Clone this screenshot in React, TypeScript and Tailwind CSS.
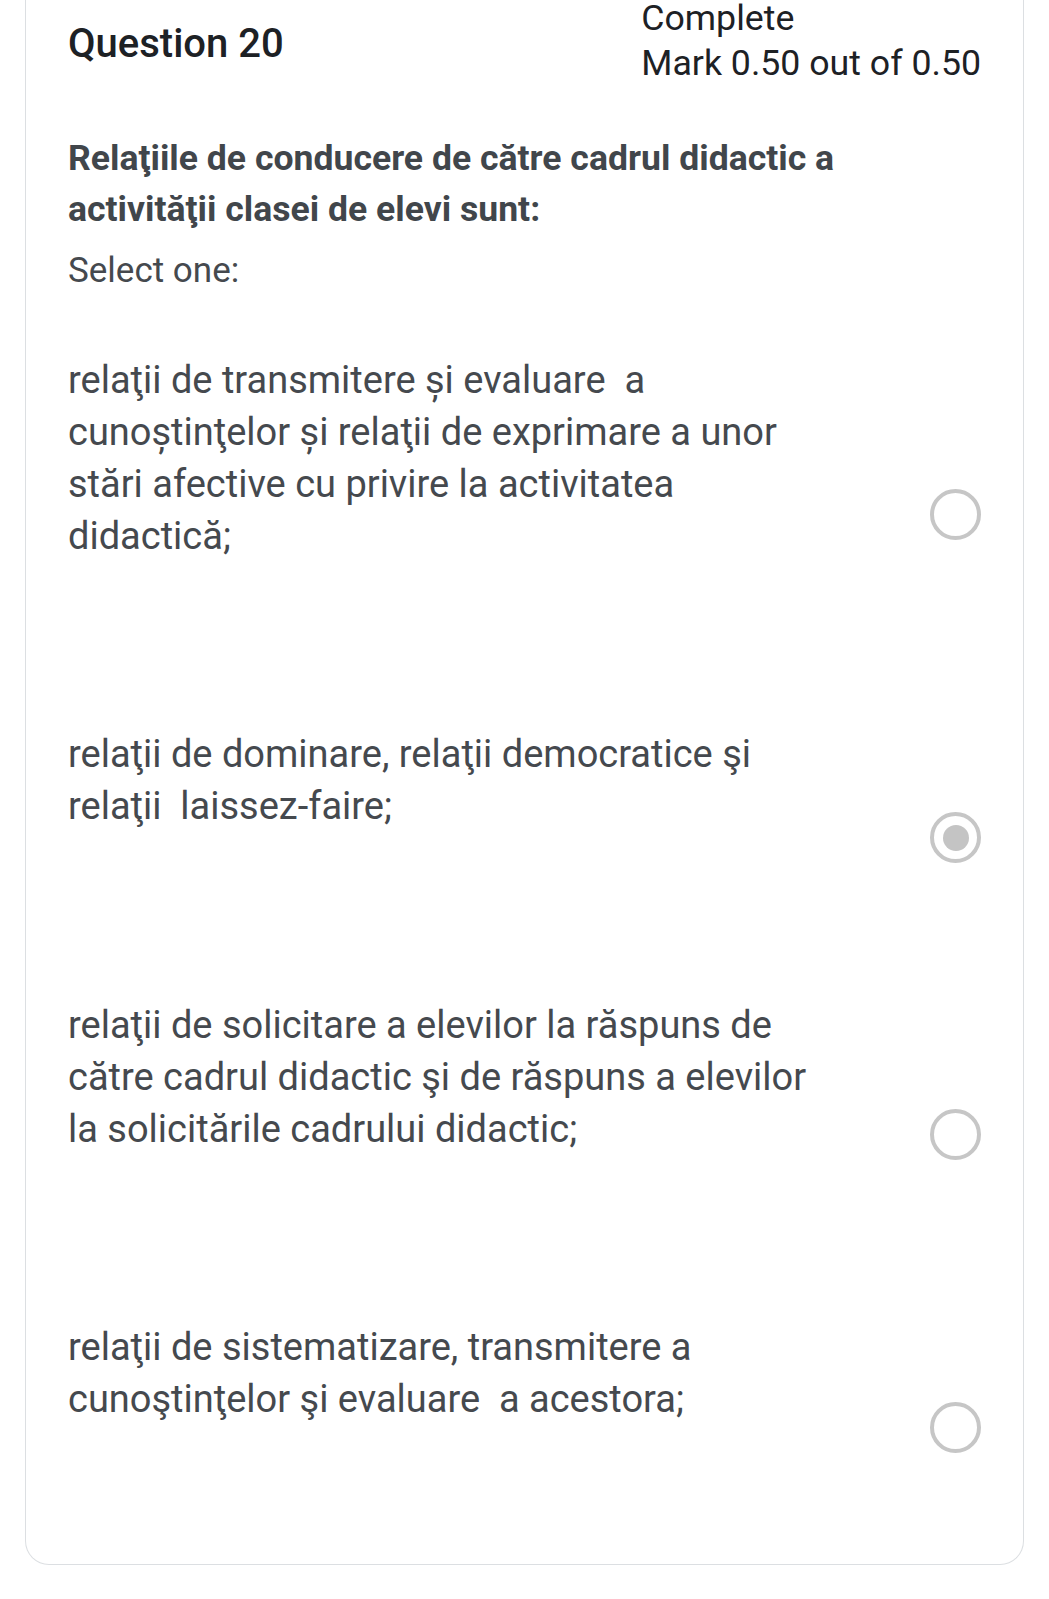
import React from "react";

type Opt = { lines: string[]; rowTop: string; radioTop: string; checked?: boolean };

const options: Opt[] = [
  {
    lines: [
      "relaţii de transmitere și evaluare  a",
      "cunoștinţelor și relaţii de exprimare a unor",
      "stări afective cu privire la activitatea",
      "didactică;",
    ],
    rowTop: "mt-[58px]",
    radioTop: "mt-[135px]",
  },
  {
    lines: ["relaţii de dominare, relaţii democratice şi", "relaţii  laissez-faire;"],
    rowTop: "mt-[166px]",
    radioTop: "mt-[84px]",
    checked: true,
  },
  {
    lines: [
      "relaţii de solicitare a elevilor la răspuns de",
      "către cadrul didactic şi de răspuns a elevilor",
      "la solicitările cadrului didactic;",
    ],
    rowTop: "mt-[136px]",
    radioTop: "mt-[110px]",
  },
  {
    lines: ["relaţii de sistematizare, transmitere a", "cunoştinţelor şi evaluare  a acestora;"],
    rowTop: "mt-[161px]",
    radioTop: "mt-[81px]",
  },
];

function Radio({ checked }: { checked?: boolean }) {
  return (
    <div className="w-[51px] h-[51px] rounded-full border-[4px] border-[#c6c6c6] flex items-center justify-center shrink-0">
      {checked && <div className="w-[26px] h-[26px] rounded-full bg-[#c4c4c4]" />}
    </div>
  );
}

export default function App() {
  return (
    <div
      className="w-[1049px] h-[1599px] bg-white overflow-hidden"
      style={{ fontFamily: "Roboto, 'Noto Sans', sans-serif" }}
    >
      <div className="mx-[25px] mt-[-6px] border-x-[1.5px] border-b-[1.5px] border-[#dcdfe2] rounded-b-[24px] px-[42px] pb-[111px]">
        <div className="flex justify-between items-start">
          <div className="mt-[27px] text-[40px] leading-[45px] font-medium text-[#1d2125]">Question 20</div>
          <div className="mt-[2px] text-[35.7px] leading-[45px] text-[#1d2125]">
            <div>Complete</div>
            <div>Mark 0.50 out of 0.50</div>
          </div>
        </div>
        <div className="mt-[47px] text-[35.6px] leading-[51px] font-bold text-[#41464b]">
          <div className="whitespace-nowrap">Relaţiile de conducere de către cadrul didactic a</div>
          <div className="whitespace-nowrap">activităţii clasei de elevi sunt:</div>
        </div>
        <div className="mt-[10px] text-[35px] leading-[51px] text-[#45494e]">Select one:</div>
        <div className="flex flex-col">
          {options.map((o, i) => (
            <div key={i} className={`flex justify-between items-start ${o.rowTop}`}>
              <div className="text-[38px] leading-[52px] text-[#45494e]">
                {o.lines.map((l, j) => (
                  <div key={j} className="whitespace-pre">
                    {l}
                  </div>
                ))}
              </div>
              <div className={o.radioTop}>
                <Radio checked={o.checked} />
              </div>
            </div>
          ))}
        </div>
      </div>
    </div>
  );
}
